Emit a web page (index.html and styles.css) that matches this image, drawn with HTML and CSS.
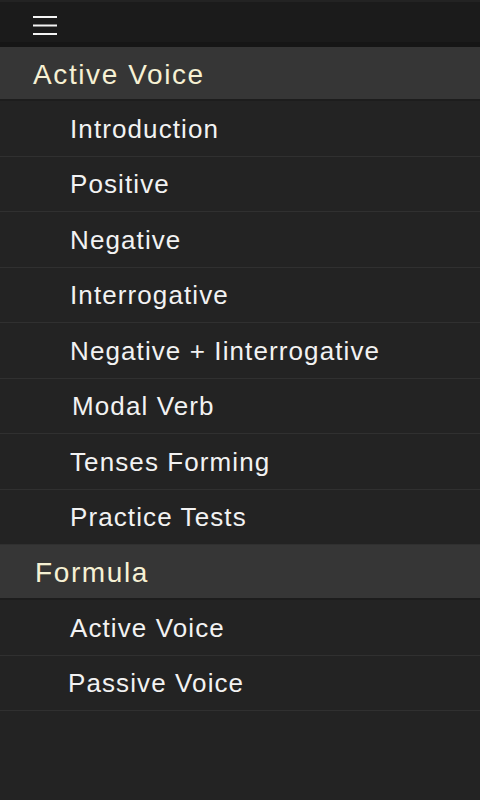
FILE: index.html
```html
<!DOCTYPE html>
<html>
<head>
<meta charset="utf-8">
<link rel="stylesheet" href="styles.css">
</head>
<body>
<div class="app">
  <header class="topbar">
    <button class="menu" aria-label="Menu">
      <svg width="26" height="22" viewBox="0 0 26 22">
        <rect x="1" y="3" width="24" height="2" fill="#f4f4f4"/>
        <rect x="1" y="11.5" width="24" height="2" fill="#f4f4f4"/>
        <rect x="1" y="20" width="24" height="2" fill="#f4f4f4"/>
      </svg>
    </button>
  </header>
  <section class="group">
    <h2 class="group-title">Active Voice</h2>
    <ul class="items">
      <li class="item">Introduction</li>
      <li class="item">Positive</li>
      <li class="item">Negative</li>
      <li class="item">Interrogative</li>
      <li class="item">Negative + Iinterrogative</li>
      <li class="item shift-r">Modal Verb</li>
      <li class="item">Tenses Forming</li>
      <li class="item">Practice Tests</li>
    </ul>
  </section>
  <section class="group">
    <h2 class="group-title formula">Formula</h2>
    <ul class="items">
      <li class="item">Active Voice</li>
      <li class="item shift-l">Passive Voice</li>
    </ul>
  </section>
</div>
</body>
</html>
```
FILE: styles.css
```css
* { box-sizing: border-box; }
html, body {
  margin: 0;
  padding: 0;
  background: #232323;
  height: 100%;
}
body {
  font-family: "Liberation Sans", Arial, sans-serif;
}
.app {
  width: 480px;
  min-height: 800px;
  background: #232323;
}
.topbar {
  height: 47px;
  background: #1b1b1b;
  border-top: 2px solid #232323;
  border-bottom: 5px solid #161616;
  display: flex;
  align-items: center;
  padding-left: 32px;
}
.menu {
  background: none;
  border: 0;
  padding: 0;
  margin: 0;
  display: block;
  height: 22px;
  margin-top: 4px;
}
.menu svg { display: block; }
.group-title {
  margin: 0;
  height: 54px;
  background: #363636;
  border-bottom: 2px solid #1d1d1d;
  color: #f6f1d4;
  font-weight: normal;
  font-size: 28px;
  letter-spacing: 1.6px;
  display: flex;
  align-items: center;
  padding-left: 33px;
  padding-top: 3px;
}
.group-title.formula {
  padding-left: 35px;
  height: 55px;
}
.items {
  list-style: none;
  margin: 0;
  padding: 0;
}
.item {
  height: 55.5px;
  border-bottom: 1.5px solid #303030;
  color: #f2f2f2;
  font-size: 26px;
  letter-spacing: 1.1px;
  display: flex;
  align-items: center;
  padding-left: 70px;
  padding-top: 2px;
}
.item.shift-r { padding-left: 72px; }
.item.shift-l { padding-left: 68px; }
```
